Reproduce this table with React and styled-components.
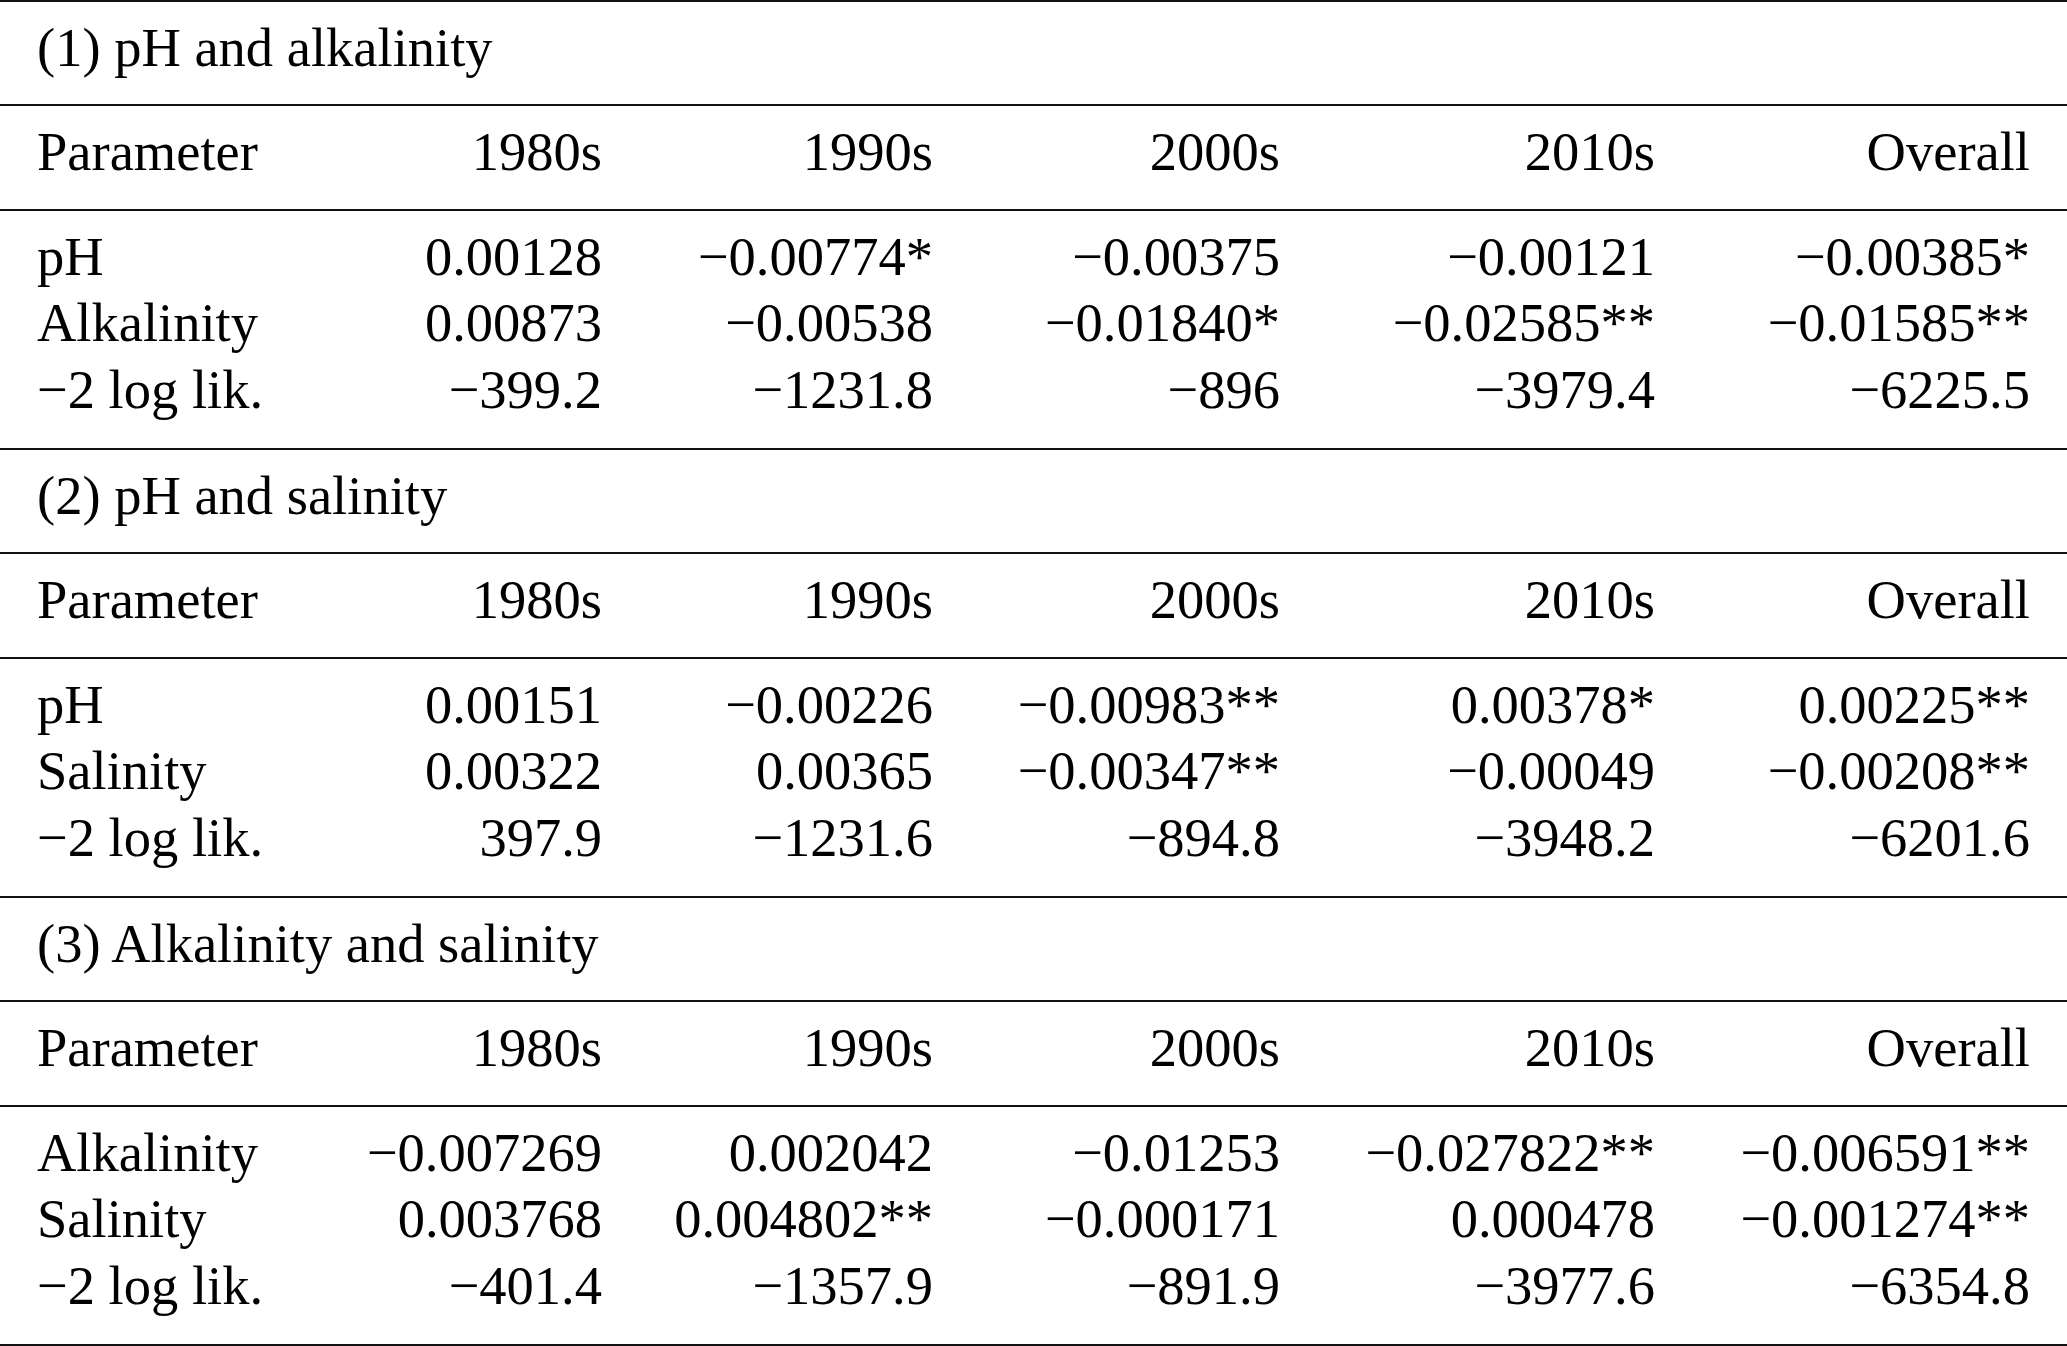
import React from 'react';
import styled, { createGlobalStyle } from 'styled-components';

const GlobalStyle = createGlobalStyle`
  html, body {
    margin: 0;
    padding: 0;
    background: #fff;
  }
  body {
    font-family: "Liberation Serif", "Times New Roman", serif;
    color: #000;
  }
`;

const COLUMNS = '303px 262px 331px 347px 375px 375px';

const Table = styled.div`
  width: 2067px;
  border-bottom: 2px solid #111;
  font-size: 54.5px;
  line-height: 66.5px;
`;

const Section = styled.section`
  display: flex;
  flex-direction: column;
`;

const TitleRow = styled.div`
  box-sizing: border-box;
  height: 104px;
  padding: 13px 37px 0 37px;
  border-top: 2px solid #111;
  white-space: nowrap;
`;

const HeaderBlock = styled.div`
  box-sizing: border-box;
  height: 105px;
  padding: 13px 37px 0 37px;
  border-top: 2px solid #111;
`;

const DataBlock = styled.div`
  box-sizing: border-box;
  height: 239px;
  padding: 12.5px 37px 0 37px;
  border-top: 2px solid #111;
`;

const Row = styled.div`
  display: grid;
  grid-template-columns: ${COLUMNS};
`;

const Cell = styled.div`
  text-align: ${(p) => (p.$left ? 'left' : 'right')};
  white-space: nowrap;
`;

const HEADERS = ['Parameter', '1980s', '1990s', '2000s', '2010s', 'Overall'];

const SECTIONS = [
  {
    title: '(1) pH and alkalinity',
    rows: [
      ['pH', '0.00128', '−0.00774*', '−0.00375', '−0.00121', '−0.00385*'],
      ['Alkalinity', '0.00873', '−0.00538', '−0.01840*', '−0.02585**', '−0.01585**'],
      ['−2 log lik.', '−399.2', '−1231.8', '−896', '−3979.4', '−6225.5'],
    ],
  },
  {
    title: '(2) pH and salinity',
    rows: [
      ['pH', '0.00151', '−0.00226', '−0.00983**', '0.00378*', '0.00225**'],
      ['Salinity', '0.00322', '0.00365', '−0.00347**', '−0.00049', '−0.00208**'],
      ['−2 log lik.', '397.9', '−1231.6', '−894.8', '−3948.2', '−6201.6'],
    ],
  },
  {
    title: '(3) Alkalinity and salinity',
    rows: [
      ['Alkalinity', '−0.007269', '0.002042', '−0.01253', '−0.027822**', '−0.006591**'],
      ['Salinity', '0.003768', '0.004802**', '−0.000171', '0.000478', '−0.001274**'],
      ['−2 log lik.', '−401.4', '−1357.9', '−891.9', '−3977.6', '−6354.8'],
    ],
  },
];

const TableRow = ({ cells }) => (
  <Row>
    {cells.map((c, i) => (
      <Cell key={i} $left={i === 0}>
        {c}
      </Cell>
    ))}
  </Row>
);

const App = () => {
  return (
    <>
      <GlobalStyle />
      <Table>
        {SECTIONS.map((s) => (
          <Section key={s.title}>
            <TitleRow>{s.title}</TitleRow>
            <HeaderBlock>
              <TableRow cells={HEADERS} />
            </HeaderBlock>
            <DataBlock>
              {s.rows.map((r) => (
                <TableRow key={r[0]} cells={r} />
              ))}
            </DataBlock>
          </Section>
        ))}
      </Table>
    </>
  );
};

export default App;
